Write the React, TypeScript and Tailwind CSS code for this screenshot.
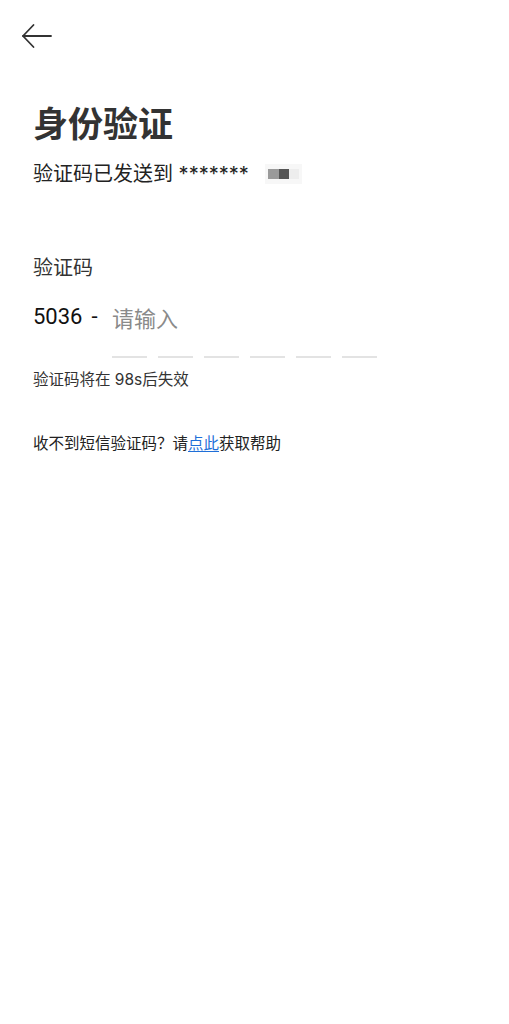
import React from "react";

export default function App() {
  return (
    <div
      className="min-h-[1024px] w-full bg-white text-[#222]"
      style={{ fontFamily: 'Inter, "Noto Sans CJK SC", "Noto Sans", sans-serif' }}
    >
      <div className="pt-[23px] pl-[21px]">
        <svg width="32" height="26" viewBox="0 0 32 26" fill="none" className="block">
          <path d="M2 13 H30" stroke="#333" strokeWidth="1.8" strokeLinecap="round" />
          <path d="M12.5 2 L2 13 L12.5 24" stroke="#333" strokeWidth="1.8" strokeLinecap="round" strokeLinejoin="round" />
        </svg>
      </div>
      <div className="px-[33px]">
        <h1
          className="mt-[53px] text-[35px] leading-[40px] font-bold text-[#333]"
          style={{ fontFamily: '"Noto Sans CJK SC", sans-serif' }}
        >
          身份验证
        </h1>
        <div className="mt-[18px] flex items-center text-[20px] leading-[28px] text-[#222]">
          <span>验证码已发送到 *******</span>
          <span className="ml-[16px] inline-flex items-center blur-[0.6px] bg-[#f7f7f7] px-[3px] py-[5px]">
            <span className="block h-[10px] w-[11px] bg-[#9a9a9a]" />
            <span className="block h-[10px] w-[10px] bg-[#555]" />
            <span className="block h-[10px] w-[10px] bg-[#ededed]" />
          </span>
        </div>
        <div className="mt-[66px] text-[20px] leading-[28px] text-[#333]">验证码</div>
        <div className="mt-[20px] flex items-start">
          <span className="flex w-[79px] text-[22px] leading-[30px] text-[#111]">
            <span style={{ fontFamily: 'Roboto, "Noto Sans CJK SC", sans-serif' }}>5036</span>
            <span className="ml-[9px]" style={{ fontFamily: 'Roboto, sans-serif' }}>-</span>
          </span>
          <div className="flex flex-col">
            <span
              className="text-[22px] leading-[30px] text-[#8a8a8a]"
              style={{ fontFamily: '"Noto Sans CJK SC", sans-serif' }}
            >
              请输入
            </span>
            <div className="mt-[24px] flex gap-[11px]">
              <span className="block h-[2px] w-[35px] bg-[#e3e3e3]" />
              <span className="block h-[2px] w-[35px] bg-[#e3e3e3]" />
              <span className="block h-[2px] w-[35px] bg-[#e3e3e3]" />
              <span className="block h-[2px] w-[35px] bg-[#e3e3e3]" />
              <span className="block h-[2px] w-[35px] bg-[#e3e3e3]" />
              <span className="block h-[2px] w-[35px] bg-[#e3e3e3]" />
            </div>
          </div>
        </div>
        <div className="mt-[11px] text-[15.5px] leading-[22px] text-[#333]">验证码将在 98s后失效</div>
        <div className="mt-[42px] text-[15.5px] leading-[22px] text-[#222]">
          收不到短信验证码？请<span className="text-[#1f6fd8] underline underline-offset-2">点此</span>获取帮助
        </div>
      </div>
    </div>
  );
}
